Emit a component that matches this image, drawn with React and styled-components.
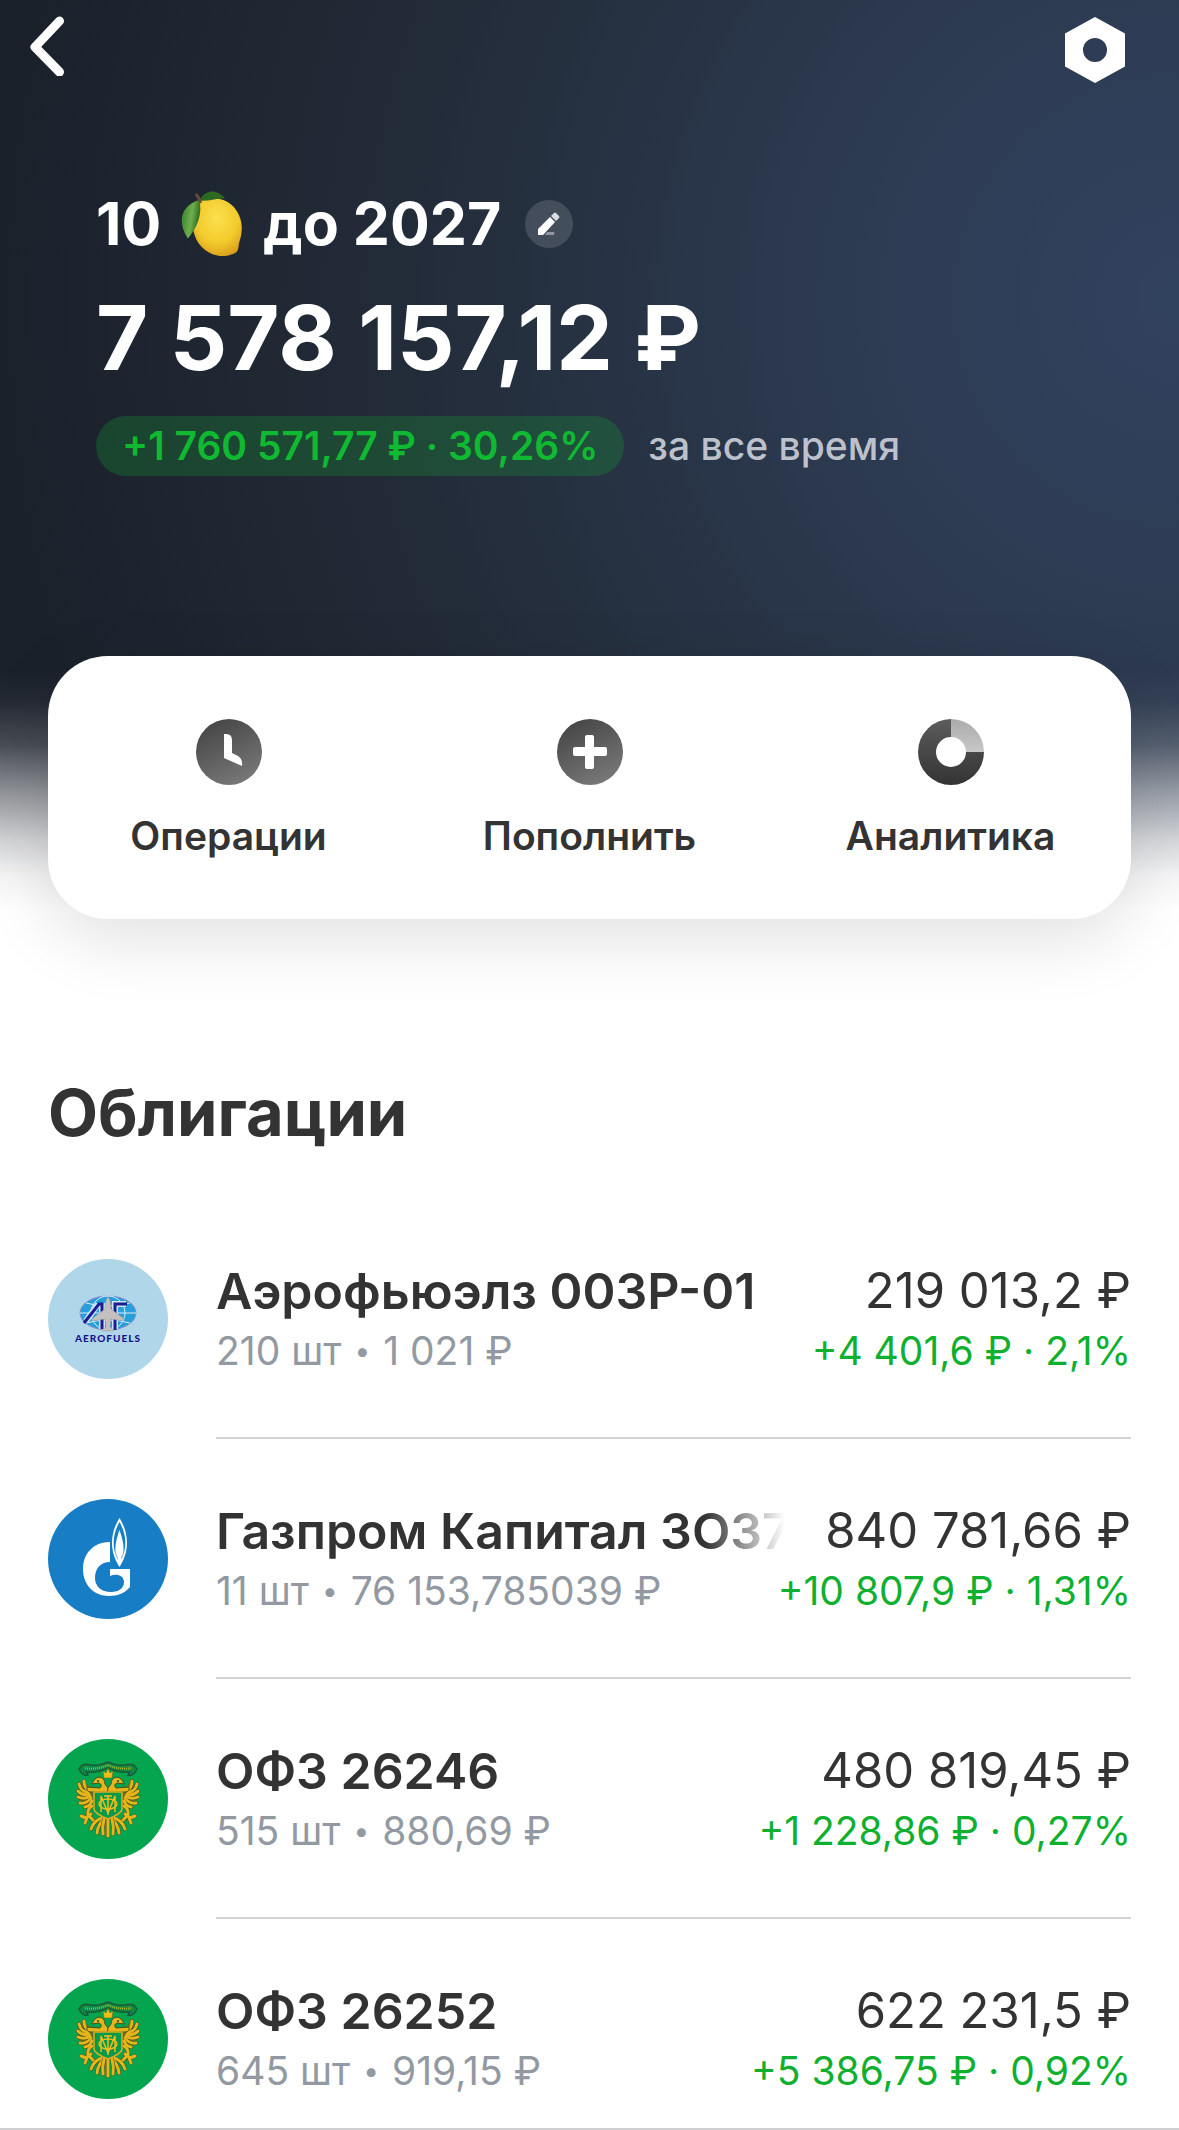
import React from 'react';
import styled, { createGlobalStyle } from 'styled-components';

const GlobalStyle = createGlobalStyle`
  * {
    box-sizing: border-box;
  }

  body {
    margin: 0;
    background: #ffffff;
    color: #333333;
    font-family: Inter, 'Noto Sans', sans-serif;
  }

  button {
    border: 0;
    padding: 0;
    background: none;
    color: inherit;
    font: inherit;
    cursor: pointer;
  }
`;

const Page = styled.div`
  overflow: hidden;
  border-bottom: 2px solid #cfcfd1;
`;

const Hero = styled.header`
  padding-bottom: 140px;
  background:
    linear-gradient(
      to bottom,
      rgba(255, 255, 255, 0) 0,
      rgba(255, 255, 255, 0) 670px,
      rgba(255, 255, 255, 0.04) 700px,
      rgba(255, 255, 255, 0.2) 745px,
      rgba(255, 255, 255, 0.5) 790px,
      rgba(255, 255, 255, 0.8) 840px,
      rgba(255, 255, 255, 0.95) 875px,
      #ffffff 910px
    ),
    radial-gradient(
      circle 1180px at 100% 300px,
      #31425f 0%,
      #2d3b52 28%,
      #273344 48%,
      #212a36 70%,
      #1b212b 100%
    );
`;

const TopBar = styled.nav`
  display: flex;
  justify-content: space-between;
  align-items: flex-start;
  padding: 16px 53px 0 28px;
`;

const IconButton = styled.button`
  display: flex;
  color: #ffffff;
`;

const Summary = styled.section`
  display: flex;
  flex-direction: column;
  align-items: flex-start;
  padding: 104px 96px 180px;
  color: #ffffff;
`;

const TitleRow = styled.div`
  display: flex;
  align-items: center;
  gap: 24px;
`;

const Title = styled.h1`
  display: flex;
  align-items: center;
  gap: 18px;
  margin: 0;
  font-size: 59px;
  font-weight: 700;
  line-height: 72px;
`;

const EditButton = styled.button`
  display: flex;
  align-items: center;
  justify-content: center;
  width: 48px;
  height: 48px;
  border-radius: 50%;
  background: rgba(255, 255, 255, 0.14);
`;

const Balance = styled.div`
  margin-top: 24px;
  font-size: 90px;
  font-weight: 700;
  line-height: 108px;
  white-space: nowrap;
`;

const ProfitRow = styled.div`
  display: flex;
  align-items: center;
  gap: 24px;
  margin-top: 24px;
  font-size: 39px;
  font-weight: 500;
  line-height: 60px;
  white-space: nowrap;
`;

const Profit = styled.span`
  padding: 0 26px;
  border-radius: 30px;
  background: rgba(16, 185, 50, 0.22);
  color: #0fb931;
  font-weight: 600;
`;

const Period = styled.span`
  color: #bcc1cb;
`;

const Actions = styled.div`
  display: grid;
  grid-template-columns: repeat(3, 1fr);
  margin: 0 48px;
  padding: 63px 0 59px;
  border-radius: 60px;
  background: #ffffff;
  box-shadow: 0 20px 70px rgba(0, 0, 0, 0.12);
`;

const Action = styled.button`
  display: flex;
  flex-direction: column;
  align-items: center;
  gap: 27px;
  font-size: 39px;
  font-weight: 600;
  line-height: 48px;
`;

const Section = styled.main`
  padding: 0 48px;
`;

const SectionTitle = styled.h2`
  margin: 0;
  padding: 14px 0 106px;
  font-size: 65px;
  font-weight: 700;
  line-height: 80px;
`;

const List = styled.ul`
  display: flex;
  flex-direction: column;
  gap: 60px;
  margin: 0;
  padding: 0;
  list-style: none;
`;

const Item = styled.li`
  display: flex;
  gap: 48px;
`;

const Logo = styled.div`
  flex: none;
  width: 120px;
  height: 120px;
`;

const Details = styled.div`
  flex: 1;
  min-width: 0;
  padding-bottom: ${({ $last }) => ($last ? '29px' : '58px')};
  border-bottom: ${({ $last }) => ($last ? '0' : '2px solid #d3d4d6')};
`;

const Line = styled.div`
  display: flex;
  justify-content: space-between;
  gap: 40px;
  white-space: nowrap;
`;

const Name = styled.div`
  flex: 0 1 auto;
  min-width: 0;
  overflow: hidden;
  font-size: 50px;
  font-weight: 600;
  line-height: 64px;
  ${({ $faded }) =>
    $faded && 'mask-image: linear-gradient(to left, transparent 0, #000 80px);'}
`;

const Sum = styled.div`
  font-size: 49px;
  line-height: 64px;
`;

const Amount = styled.div`
  color: #9299a2;
  font-size: 39px;
  line-height: 56px;
`;

const Bullet = styled.span`
  margin: 0 2px;
  font-size: 28px;
  line-height: 28px;
  vertical-align: 4px;
`;

const Gain = styled.div`
  color: #0fb02f;
  font-size: 39px;
  line-height: 56px;
`;

const BackIcon = () => (
  <svg width="40" height="60" viewBox="0 0 40 60" fill="none">
    <path d="M31.500 5 L7 31 L31.500 56" stroke="currentColor" strokeWidth="9" strokeLinecap="round" strokeLinejoin="round" />
  </svg>
);

const SettingsIcon = () => (
  <svg width="62" height="68" viewBox="0 0 62 68">
    <path
      d="M31 1 L61 17.500 V50.500 L31 67 L1 50.500 V17.500 Z M31 22 A12 12 0 1 0 31 46 A12 12 0 1 0 31 22 Z"
      fill="currentColor"
      fillRule="evenodd"
    />
  </svg>
);

const PencilIcon = () => (
  <svg width="24" height="24" viewBox="0 0 24 24">
    <path d="M1 23 V17 L13 5 L18 10 L7 22 L6 23 Z" fill="#ffffff" />
    <path d="M14 4 L17 1 Q18 0 19 1 L22 4 Q23 5 22 6 L19 9 Z" fill="#d9dce2" />
    <path d="M10 20 H17 Q18 21.500 17 23 H8 Z" fill="#8f96a2" />
  </svg>
);

const LemonIcon = () => (
  <svg width="66" height="66" viewBox="0 0 66 68" role="img" aria-label="лимон">
    <defs>
      <radialGradient id="lemonSkin" cx="0.5" cy="0.35" r="0.7">
        <stop offset="0" stopColor="#fbe04f" />
        <stop offset="0.6" stopColor="#f3cb2c" />
        <stop offset="1" stopColor="#d89b1c" />
      </radialGradient>
      <linearGradient id="lemonLeaf" x1="0" y1="0" x2="1" y2="0.3">
        <stop offset="0" stopColor="#2f7a26" />
        <stop offset="0.6" stopColor="#6fae4d" />
        <stop offset="1" stopColor="#2c6a22" />
      </linearGradient>
    </defs>
    <path
      d="M20 10 C31 5 46 7 55 16 C64 26 66 39 61 53 C60 57 61 61 57 64 C52 66 49 67 44 67 C31 67 19 58 15 45 C11 33 13 16 20 10 Z"
      fill="url(#lemonSkin)"
    />
    <path d="M20 10 C25 0 36 -4 47 8 C38 7 30 11 20 10 Z" fill="#2c6a22" />
    <path d="M20 9 C4 14 -5 28 8 49 C15 41 24 27 20 9 Z" fill="url(#lemonLeaf)" />
    <path d="M17 4 Q19 6 21 11" stroke="#6b4a35" strokeWidth="3" fill="none" strokeLinecap="round" />
  </svg>
);

const ClockIcon = () => (
  <svg width="66" height="66" viewBox="0 0 66 66">
    <defs>
      <linearGradient id="clockFill" x1="0.2" y1="0" x2="0.7" y2="1">
        <stop offset="0" stopColor="#444444" />
        <stop offset="1" stopColor="#797979" />
      </linearGradient>
    </defs>
    <circle cx="33" cy="33" r="33" fill="url(#clockFill)" />
    <path d="M28 15 H30 Q36 15 36 21 V34 L42 37 Q47 40 46 47 L28 39 Z" fill="#ffffff" />
  </svg>
);

const PlusIcon = () => (
  <svg width="66" height="66" viewBox="0 0 66 66">
    <defs>
      <linearGradient id="plusFill" x1="0.2" y1="0" x2="0.7" y2="1">
        <stop offset="0" stopColor="#444444" />
        <stop offset="1" stopColor="#797979" />
      </linearGradient>
    </defs>
    <circle cx="33" cy="33" r="33" fill="url(#plusFill)" />
    <rect x="28" y="16" width="9" height="34" rx="2" fill="#ffffff" />
    <rect x="16" y="28" width="34" height="9" rx="2" fill="#ffffff" />
  </svg>
);

const ChartIcon = () => (
  <svg width="66" height="66" viewBox="0 0 66 66">
    <defs>
      <linearGradient id="chartDark" x1="0" y1="0" x2="0" y2="1">
        <stop offset="0" stopColor="#5c5c5c" />
        <stop offset="1" stopColor="#333333" />
      </linearGradient>
      <linearGradient id="chartLight" x1="0" y1="0" x2="0" y2="1">
        <stop offset="0" stopColor="#aaaaaa" />
        <stop offset="1" stopColor="#c8c8c8" />
      </linearGradient>
    </defs>
    <path d="M33 0 A33 33 0 1 0 66 33 H48 A15 15 0 1 1 33 18 Z" fill="url(#chartDark)" />
    <path d="M33 0 A33 33 0 0 1 66 33 H48 A15 15 0 0 0 33 18 Z" fill="url(#chartLight)" />
  </svg>
);

const AerofuelsLogo = () => (
  <svg width="120" height="120" viewBox="0 0 120 120">
    <circle cx="60" cy="60" r="60" fill="#b0d6ea" />
    <ellipse cx="60" cy="54" rx="28" ry="17" fill="#279fdc" stroke="#8e8bc0" />
    <g fill="none" stroke="#d9eef8" strokeWidth="1">
      <ellipse cx="60" cy="54" rx="17" ry="17" />
      <path d="M32 54 H88 M38 44 Q60 50 82 44 M38 64 Q60 58 82 64" />
    </g>
    <g fill="none" stroke="#cfe3f3" strokeWidth="6">
      <path d="M38 62 L50 45 M54 44 V70 M67 70 V45 H78" />
    </g>
    <g fill="none" stroke="#1c1c93" strokeWidth="3">
      <path d="M36 64 L51 45 H54 V70" />
      <path d="M67 71 V45 H79" />
    </g>
    <path
      d="M60 38 Q63 41 63 50 L75 59 V62 L63 60 L62 68 L66 71 V72 H54 V71 L58 68 L57 60 L45 62 V59 L57 50 Q57 41 60 38 Z"
      fill="#c3c0bd"
      stroke="#9895a5"
      strokeWidth="0.5"
    />
    <text
      x="60"
      y="83"
      fill="#14148e"
      fontFamily="Lato, sans-serif"
      fontSize="10"
      fontWeight="900"
      letterSpacing="1"
      textAnchor="middle"
    >
      AEROFUELS
    </text>
  </svg>
);

const GazpromLogo = () => (
  <svg width="120" height="120" viewBox="0 0 120 120">
    <circle cx="60" cy="60" r="60" fill="#177dc5" />
    <path
      d="M62 43 C45 43 35 55 35 70 C35 86 46 97 61 97 C70 97 77 94 82 88 V70 H62 V77 C68 74 76 76 76 83 C76 89 71 93 63 93 C53 93 47 87 47 79 C47 69 53 63 62 63 Z"
      fill="#ffffff"
    />
    <path
      d="M71.500 19 C62 34 61 52 71.500 68 C82 52 81 34 71.500 19 Z M71.500 23 C79 36 79 50 73 61 C76 50 73 40 71.500 31 C69 40 67 50 70 61 C64 50 64 36 71.500 23 Z"
      fill="#ffffff"
      fillRule="evenodd"
    />
    <path d="M71.500 31 C68 42 65 50 70 62 C67 55 70 51 71.500 48 C73 51 76 55 73 62 C78 50 75 42 71.500 31 Z" fill="#ffffff" />
  </svg>
);

const feathers = [
  'M40 51 Q36 48 36 42',
  'M40 53 Q33 53 31 45',
  'M41 55 Q34 57 30 52',
  'M42 57 Q36 61 30 58',
  'M43 59 Q39 65 32 64',
  'M44 62 Q42 67 37 68',
  'M44 67 Q39 70 40 76',
  'M43 75 L38 79 L33 77 M39 79 L37 84 M41 77 L45 81',
  'M58 79 Q50 84 49 94',
  'M56 78 Q45 82 43 90',
];

const EagleHalf = () => (
  <g fill="none" strokeLinecap="round" strokeLinejoin="round">
    <path d="M36 43 L31 47 L30 58 L34 65 L40 68 L47 66 L46 50 Z" fill="#6f7418" />
    {feathers.map(d => (
      <path key={d} d={d} stroke="#3f521c" strokeWidth="4" />
    ))}
    {feathers.map(d => (
      <path key={d} d={d} stroke="#e5b51d" strokeWidth="3" />
    ))}
    <path
      d="M60 53 H42 Q38 52 39 48 L52 49 Q55 46 51 44 L44 45 Q46 39 51 38 Q57 39 57 45 L60 49 Z"
      fill="#e5b51d"
      stroke="#3f521c"
      strokeWidth="1"
    />
    <circle cx="50" cy="42" r="1" fill="#2f4a20" />
  </g>
);

const TreasuryLogo = () => (
  <svg width="120" height="120" viewBox="0 0 120 120">
    <circle cx="60" cy="60" r="60" fill="#04a54e" />
    <path
      d="M33 27 Q36 24 43 26 Q52 27 60 23 Q68 27 77 26 Q84 24 87 27 L89 30 Q85 38 80 36 L82 33 Q70 34 60 29 Q50 34 38 33 L40 36 Q35 38 31 30 Z"
      fill="#0b8b45"
      stroke="#1b5a35"
      strokeWidth="1.500"
    />
    <path d="M37 29 Q49 31 60 26 Q71 31 83 29" fill="none" stroke="#a5b52c" strokeWidth="2" strokeDasharray="1 1" />
    <EagleHalf />
    <g transform="translate(120 0) scale(-1 1)">
      <EagleHalf />
    </g>
    <path d="M60 78 V97 M56 80 Q54 88 55 95 M64 80 Q66 88 65 95" stroke="#3f521c" strokeWidth="4" fill="none" strokeLinecap="round" />
    <path d="M60 78 V97 M56 80 Q54 88 55 95 M64 80 Q66 88 65 95" stroke="#e5b51d" strokeWidth="3" fill="none" strokeLinecap="round" />
    <path d="M56 39 L55 32 L58 34 L60 29 L62 34 L65 32 L64 39 Z" fill="#f0bd18" stroke="#5c631b" strokeWidth="0.500" />
    <path d="M46 53 H74 V70 Q73 75 60 80 Q47 75 46 70 Z" fill="#07994b" stroke="#d9ad20" strokeWidth="1.500" />
    <g fill="none" stroke="#edbd1c" strokeWidth="1.500">
      <path d="M60 56 V76 M56 57 H64 M53 73 V57 L60 74 L67 57 V73" />
      <ellipse cx="60" cy="65" rx="9" ry="5" />
    </g>
  </svg>
);

const actions = [
  { label: 'Операции', Icon: ClockIcon },
  { label: 'Пополнить', Icon: PlusIcon },
  { label: 'Аналитика', Icon: ChartIcon },
];

const bonds = [
  {
    name: 'Аэрофьюэлз 003Р-01',
    count: '210 шт',
    price: '1 021 ₽',
    sum: '219 013,2 ₽',
    gain: '+4 401,6 ₽ · 2,1%',
    Icon: AerofuelsLogo,
  },
  {
    name: 'Газпром Капитал ЗО37',
    count: '11 шт',
    price: '76 153,785039 ₽',
    sum: '840 781,66 ₽',
    gain: '+10 807,9 ₽ · 1,31%',
    Icon: GazpromLogo,
    faded: true,
  },
  {
    name: 'ОФЗ 26246',
    count: '515 шт',
    price: '880,69 ₽',
    sum: '480 819,45 ₽',
    gain: '+1 228,86 ₽ · 0,27%',
    Icon: TreasuryLogo,
  },
  {
    name: 'ОФЗ 26252',
    count: '645 шт',
    price: '919,15 ₽',
    sum: '622 231,5 ₽',
    gain: '+5 386,75 ₽ · 0,92%',
    Icon: TreasuryLogo,
  },
];

const App = () => (
  <Page>
    <GlobalStyle />
    <Hero>
      <TopBar>
        <IconButton type="button" aria-label="Назад">
          <BackIcon />
        </IconButton>
        <IconButton type="button" aria-label="Настройки">
          <SettingsIcon />
        </IconButton>
      </TopBar>

      <Summary>
        <TitleRow>
          <Title>
            <span>10</span>
            <LemonIcon />
            <span>до 2027</span>
          </Title>
          <EditButton type="button" aria-label="Изменить название">
            <PencilIcon />
          </EditButton>
        </TitleRow>
        <Balance>7 578 157,12 ₽</Balance>
        <ProfitRow>
          <Profit>+1 760 571,77 ₽ · 30,26%</Profit>
          <Period>за все время</Period>
        </ProfitRow>
      </Summary>

      <Actions>
        {actions.map(({ label, Icon }) => (
          <Action key={label} type="button">
            <Icon />
            {label}
          </Action>
        ))}
      </Actions>
    </Hero>

    <Section>
      <SectionTitle>Облигации</SectionTitle>
      <List>
        {bonds.map(({ name, count, price, sum, gain, Icon, faded }, index) => (
          <Item key={name}>
            <Logo>
              <Icon />
            </Logo>
            <Details $last={index === bonds.length - 1}>
              <Line>
                <Name $faded={faded}>{name}</Name>
                <Sum>{sum}</Sum>
              </Line>
              <Line>
                <Amount>
                  {count} <Bullet>•</Bullet> {price}
                </Amount>
                <Gain>{gain}</Gain>
              </Line>
            </Details>
          </Item>
        ))}
      </List>
    </Section>
  </Page>
);

export default App;
